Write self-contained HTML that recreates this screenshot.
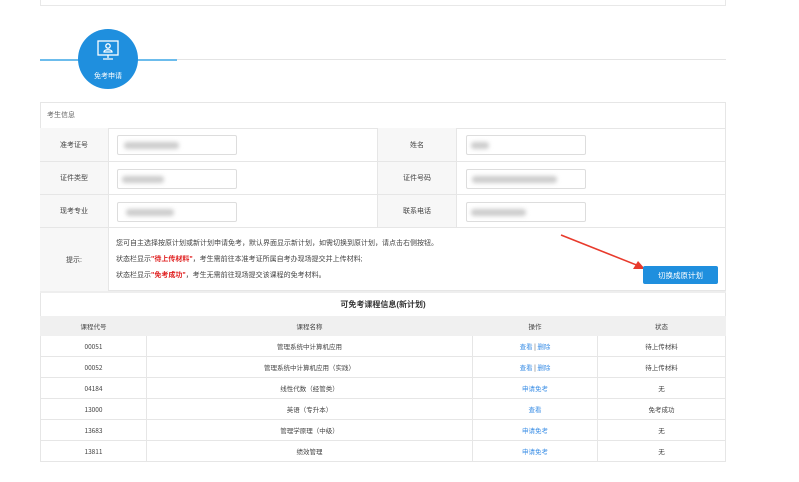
<!DOCTYPE html>
<html><head><meta charset="utf-8"><style>
*{margin:0;padding:0;box-sizing:border-box}
body{width:799px;height:482px;background:#fff;font-family:"Liberation Sans","Noto Sans CJK SC",sans-serif;font-size:7px;color:#444;position:relative;overflow:hidden}
.a{position:absolute}
.c{display:flex;align-items:center;justify-content:center}
.lbl{background:#f7f7f7;border-right:1px solid #e6e6e6;border-bottom:1px solid #e6e6e6}
.inp{position:absolute;width:120px;height:20px;border:1px solid #ddd;border-radius:2px;background:#fff}
.blur{position:absolute;top:6px;height:7px;background:#ccc;filter:blur(2px);border-radius:3px}
table{border-collapse:collapse;position:absolute;left:40px;top:316px;width:686px}
td{border:1px solid #e6e6e6;text-align:center;vertical-align:middle;height:21px;line-height:10px;font-size:6.5px;color:#444;font-family:"Noto Sans CJK SC","Liberation Sans",sans-serif}
tr.h td{background:#f0f0f0;height:19px;border-color:#f0f0f0}
.lk{color:#3a8ee6}
</style></head><body>
<div class="a" style="left:40px;top:-2px;width:686px;height:8px;border:1px solid #e8e8e8;border-top:none"></div>
<div class="a" style="left:40px;top:59px;width:686px;height:1px;background:#e4e4e4"></div>
<div class="a" style="left:40px;top:59px;width:137px;height:2px;background:#6cbcec"></div>
<div class="a" style="left:78px;top:29px;width:60px;height:60px;border-radius:50%;background:#1f8fde"></div>
<svg class="a" style="left:95px;top:40px" width="26" height="22" viewBox="0 0 26 22" fill="none" stroke="#fff" stroke-width="1.3"><rect x="3" y="1" width="20" height="14"/><circle cx="13" cy="6" r="2.2"/><path d="M9 12c0-3 8-3 8 0z"/><path d="M13 15v3M8 19h10"/></svg>
<div class="a" style="left:78px;top:71px;width:60px;text-align:center;color:#fff;font-size:7px">免考申请</div>

<div class="a" style="left:40px;top:102px;width:686px;height:189px;border:1px solid #e6e6e6"></div>
<div class="a" style="left:47px;top:110px;font-size:7px;color:#666">考生信息</div>
<div class="a" style="left:40px;top:128px;width:686px;height:1px;background:#e6e6e6"></div>
<div class="a lbl c" style="left:40px;top:128px;width:69px;height:34px">准考证号</div>
<div class="a lbl c" style="left:40px;top:162px;width:69px;height:33px">证件类型</div>
<div class="a lbl c" style="left:40px;top:195px;width:69px;height:33px">现考专业</div>
<div class="a lbl c" style="left:40px;top:228px;width:69px;height:63px;border-bottom:none">提示:</div>
<div class="a lbl c" style="left:377px;top:128px;width:80px;height:34px;border-left:1px solid #e6e6e6">姓名</div>
<div class="a lbl c" style="left:377px;top:162px;width:80px;height:33px;border-left:1px solid #e6e6e6">证件号码</div>
<div class="a lbl c" style="left:377px;top:195px;width:80px;height:33px;border-left:1px solid #e6e6e6">联系电话</div>
<div class="a" style="left:109px;top:161px;width:617px;height:1px;background:#e6e6e6"></div>
<div class="a" style="left:109px;top:194px;width:617px;height:1px;background:#e6e6e6"></div>
<div class="a" style="left:109px;top:227px;width:617px;height:1px;background:#e6e6e6"></div>
<div class="inp" style="left:117px;top:135px"><div class="blur" style="left:6px;width:55px"></div></div>
<div class="inp" style="left:117px;top:169px"><div class="blur" style="left:4px;width:42px"></div></div>
<div class="inp" style="left:117px;top:202px"><div class="blur" style="left:8px;width:48px"></div></div>
<div class="inp" style="left:466px;top:135px"><div class="blur" style="left:4px;width:18px"></div></div>
<div class="inp" style="left:466px;top:169px"><div class="blur" style="left:5px;width:85px"></div></div>
<div class="inp" style="left:466px;top:202px"><div class="blur" style="left:4px;width:55px"></div></div>
<div class="a" style="left:116px;top:236px;line-height:16px;font-size:7px;color:#444">
您可自主选择按原计划或新计划申请免考，默认界面显示新计划，如需切换到原计划，请点击右侧按钮。<br>
状态栏显示<b style="color:#e02020">"待上传材料"</b>，考生需前往本准考证所属自考办现场提交并上传材料;<br>
状态栏显示<b style="color:#e02020">"免考成功"</b>，考生无需前往现场提交该课程的免考材料。</div>
<svg class="a" style="left:555px;top:230px" width="100" height="45"><line x1="6" y1="5" x2="84" y2="36" stroke="#e83a2c" stroke-width="1.6"/><path d="M90 39L78 39L83 31Z" fill="#e83a2c"/></svg>
<div class="a c" style="left:643px;top:266px;width:75px;height:18px;background:#1f8fde;color:#fff;border-radius:2px;font-size:7.5px">切换成原计划</div>

<div class="a" style="left:40px;top:291px;width:686px;height:2px;background:#eee"></div>
<div class="a c" style="left:40px;top:293px;width:686px;height:23px;border-left:1px solid #e6e6e6;border-right:1px solid #e6e6e6;font-weight:bold;font-size:8px;color:#333">可免考课程信息(新计划)</div>
<table>
<tr class="h"><td style="width:106px">课程代号</td><td style="width:326px">课程名称</td><td style="width:125px">操作</td><td>状态</td></tr>
<tr><td>00051</td><td>管理系统中计算机应用</td><td><span class="lk">查看</span> | <span class="lk">删除</span></td><td>待上传材料</td></tr>
<tr><td>00052</td><td>管理系统中计算机应用（实践）</td><td><span class="lk">查看</span> | <span class="lk">删除</span></td><td>待上传材料</td></tr>
<tr><td>04184</td><td>线性代数（经管类）</td><td class="lk">申请免考</td><td>无</td></tr>
<tr><td>13000</td><td>英语（专升本）</td><td class="lk">查看</td><td>免考成功</td></tr>
<tr><td>13683</td><td>管理学原理（中级）</td><td class="lk">申请免考</td><td>无</td></tr>
<tr><td>13811</td><td>绩效管理</td><td class="lk">申请免考</td><td>无</td></tr>
</table>
</body></html>
